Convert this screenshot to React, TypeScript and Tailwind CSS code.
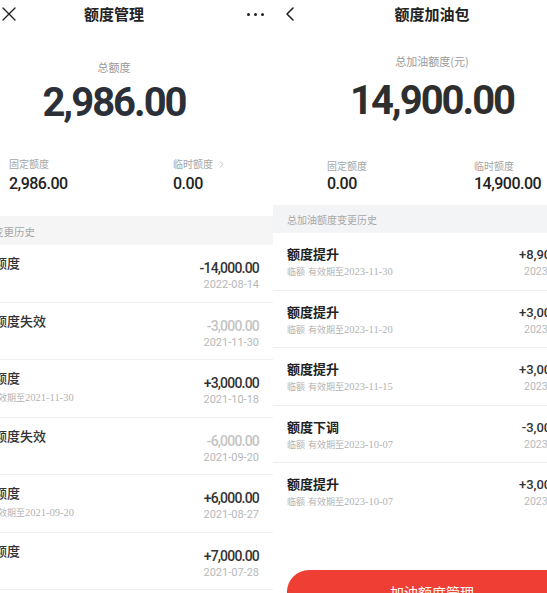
import { X, ChevronLeft, ChevronRight } from "lucide-react";

type LeftItem = { title: string; sub?: string; amount: string; date: string; faded?: boolean };
type RightItem = { title: string; sub: string; amount: string; date: string };

const leftRows: LeftItem[] = [
  { title: "调整额度", amount: "-14,000.00", date: "2022-08-14" },
  { title: "临时额度失效", amount: "-3,000.00", date: "2021-11-30", faded: true },
  { title: "临时额度", sub: "2021-11-30", amount: "+3,000.00", date: "2021-10-18" },
  { title: "临时额度失效", amount: "-6,000.00", date: "2021-09-20", faded: true },
  { title: "临时额度", sub: "2021-09-20", amount: "+6,000.00", date: "2021-08-27" },
  { title: "提升额度", amount: "+7,000.00", date: "2021-07-28" },
];

const rightRows: RightItem[] = [
  { title: "额度提升", sub: "2023-11-30", amount: "+8,900.00", date: "2023-10-31" },
  { title: "额度提升", sub: "2023-11-20", amount: "+3,000.00", date: "2023-10-21" },
  { title: "额度提升", sub: "2023-11-15", amount: "+3,000.00", date: "2023-10-16" },
  { title: "额度下调", sub: "2023-10-07", amount: "-3,000.00", date: "2023-10-07" },
  { title: "额度提升", sub: "2023-10-07", amount: "+3,000.00", date: "2023-09-08" },
];

const num = "font-['Roboto','Noto_Sans_CJK_SC',sans-serif]";

// 临额 有效期至 + 日期（日期用衬线字体，和原图一致）
function Sub({ date }: { date: string }) {
  return (
    <div className="flex items-baseline whitespace-nowrap leading-[14px] text-[#b3b3b3]">
      <span className="text-[9px]">临额</span>
      <span className="ml-[3px] text-[9px] font-['Liberation_Serif','Noto_Sans_CJK_SC',serif]">有效期至</span>
      <span className="text-[10.5px] font-['Liberation_Serif',serif]">{date}</span>
    </div>
  );
}

function LeftPanel() {
  return (
    <div className="-ml-[45px] w-[318px] shrink-0 bg-white">
      <div className="grid h-[28px] grid-cols-[1fr_auto_1fr] items-center">
        <div className="pl-[42px] text-[#222]">
          <X size={24} strokeWidth={1.4} />
        </div>
        <div className="text-[15px] font-bold text-[#222]">额度管理</div>
        <div className="flex justify-end gap-[4px] pr-[9px]">
          <span className="h-[3px] w-[3px] rounded-full bg-[#222]" />
          <span className="h-[3px] w-[3px] rounded-full bg-[#222]" />
          <span className="h-[3px] w-[3px] rounded-full bg-[#222]" />
        </div>
      </div>

      <div className="pt-[31px] text-center text-[11px] leading-[16px] text-[#9a9a9a]">总额度</div>
      <div className={`${num} mt-[6px] text-center text-[40px] font-bold leading-[44px] tracking-[-2px] text-[#2b2f38]`}>
        2,986.00
      </div>

      <div className="mt-[32px] flex pl-[54px]">
        <div className="w-[164px]">
          <div className="text-[10px] leading-[14px] text-[#a5a5a5]">固定额度</div>
          <div className={`${num} mt-[3px] text-[16px] font-medium leading-[20px] tracking-[-0.5px] text-[#222]`}>2,986.00</div>
        </div>
        <div>
          <div className="flex items-center gap-[3px] text-[10px] leading-[14px] text-[#a5a5a5]">
            临时额度
            <ChevronRight size={11} strokeWidth={1.5} />
          </div>
          <div className={`${num} mt-[3px] text-[16px] font-medium leading-[20px] tracking-[-0.5px] text-[#222]`}>0.00</div>
        </div>
      </div>

      <div className="mt-[22px] flex h-[29px] items-center bg-[#f5f5f5] pl-[17px] pt-[3px] text-[10.5px] text-[#a8a8a8]">
        额度变更历史
      </div>

      {leftRows.map((r, i) => (
        <div key={i} className="flex h-[57.5px] justify-between border-b border-[#f0f0f0] pl-[13px] pr-[14px]">
          <div className="pt-[9px]">
            <div className="text-[13px] font-medium leading-[18px] text-[#333]">{r.title}</div>
            {r.sub && (
              <div className="mt-[4px]">
                <Sub date={r.sub} />
              </div>
            )}
          </div>
          <div className="pt-[14px] text-right">
            <div
              className={`${num} text-[14px] font-medium leading-[18px] tracking-[-0.8px] ${
                r.faded ? "text-[#c4c4c4]" : "text-[#333]"
              }`}
            >
              {r.amount}
            </div>
            <div className={`${num} mt-[1px] text-[11px] leading-[14px] text-[#b8b8b8]`}>{r.date}</div>
          </div>
        </div>
      ))}
    </div>
  );
}

function RightPanel() {
  return (
    <div className="w-[318px] shrink-0 bg-white">
      <div className="grid h-[28px] grid-cols-[1fr_auto_1fr] items-center">
        <div className="pl-[5px] text-[#222]">
          <ChevronLeft size={24} strokeWidth={1.6} />
        </div>
        <div className="text-[15px] font-bold text-[#222]">额度加油包</div>
        <div />
      </div>

      <div className="pt-[25px] text-center text-[11px] leading-[16px] text-[#9a9a9a]">总加油额度(元)</div>
      <div className={`${num} mt-[10px] text-center text-[40px] font-bold leading-[44px] tracking-[-2px] text-[#2e2e2e]`}>
        14,900.00
      </div>

      <div className="mt-[36px] flex pl-[54px]">
        <div className="w-[147px]">
          <div className="text-[10px] leading-[14px] text-[#a5a5a5]">固定额度</div>
          <div className={`${num} mt-[1px] text-[16px] font-medium leading-[20px] tracking-[-0.5px] text-[#222]`}>0.00</div>
        </div>
        <div>
          <div className="text-[10px] leading-[14px] text-[#a5a5a5]">临时额度</div>
          <div className={`${num} mt-[1px] text-[16px] font-medium leading-[20px] tracking-[-0.5px] text-[#222]`}>14,900.00</div>
        </div>
      </div>

      <div className="mt-[11px] flex h-[28px] items-center bg-[#f3f4f6] pl-[14px] text-[10px] text-[#a8a8a8]">
        总加油额度变更历史
      </div>

      {rightRows.map((r, i) => (
        <div
          key={i}
          className={`flex h-[57.5px] justify-between px-[14px] ${
            i < rightRows.length - 1 ? "border-b border-[#ededed]" : ""
          }`}
        >
          <div className="pt-[12px]">
            <div className="text-[13px] font-semibold leading-[18px] text-[#222]">{r.title}</div>
            <div className="mt-[2px]">
              <Sub date={r.sub} />
            </div>
          </div>
          <div className="pt-[13px] text-right">
            <div className={`${num} text-[13px] font-medium leading-[18px] text-[#333]`}>{r.amount}</div>
            <div className={`${num} mt-[1px] text-[10.5px] leading-[14px] text-[#b8b8b8]`}>{r.date}</div>
          </div>
        </div>
      ))}

      <div className="mx-[14px] mt-[49.5px] flex h-[44px] items-center justify-center rounded-full bg-[#ef3e33] text-[14px] text-white">
        加油额度管理
      </div>
    </div>
  );
}

export default function App() {
  return (
    <div className="flex h-[593px] w-[547px] overflow-hidden bg-white font-['Noto_Sans_CJK_SC',sans-serif]">
      <LeftPanel />
      <RightPanel />
    </div>
  );
}
